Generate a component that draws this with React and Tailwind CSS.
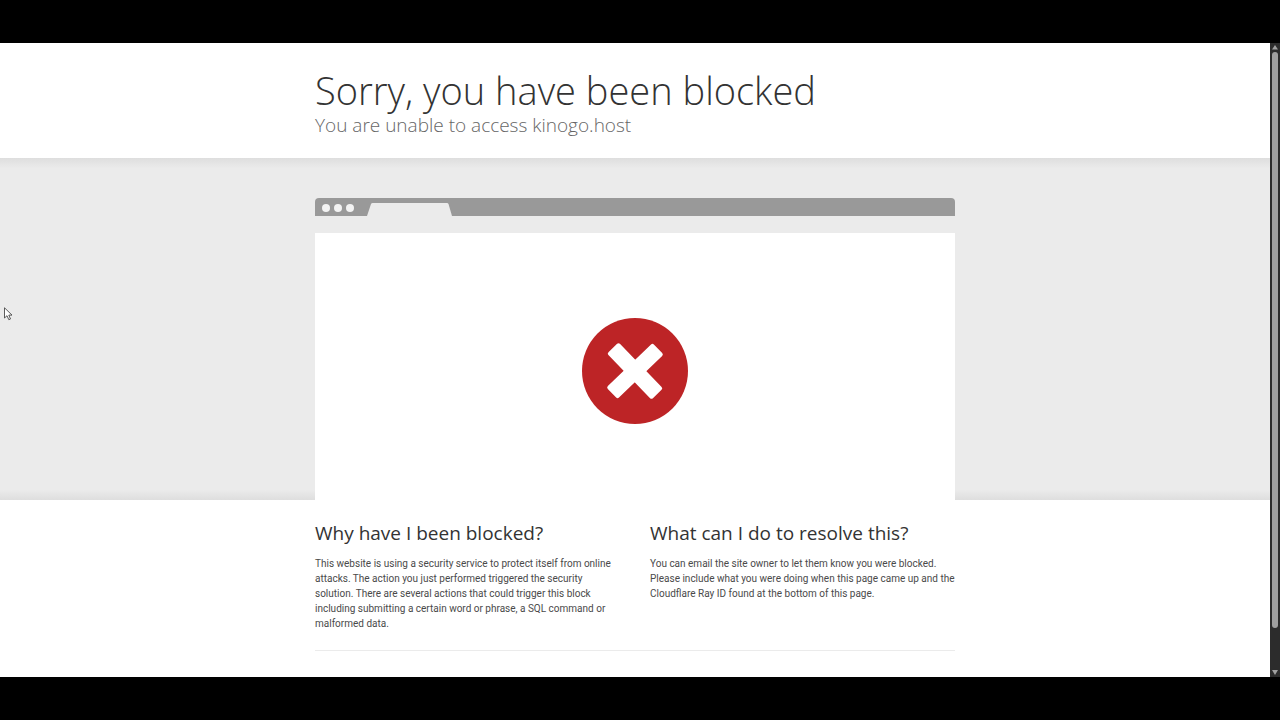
import React from 'react';

const PageHeader = () => (
  <header className="pt-[23px] pb-[21px]">
    <div className="w-1/2 min-w-[640px] mx-auto">
      <h1 className="text-[38px] leading-12 font-light text-[#333333]">Sorry, you have been blocked</h1>
      <h2 className="text-[19px] leading-[23px] font-light text-[#666666]">You are unable to access kinogo.host</h2>
    </div>
  </header>
);

const BrowserBar = () => (
  <div className="flex h-[18px] rounded-t-[4px] bg-[#999999] pl-[7px]">
    <div className="flex items-center gap-1 pt-[2px]">
      <span className="size-2 rounded-full bg-[#f3f3f3]" />
      <span className="size-2 rounded-full bg-[#f3f3f3]" />
      <span className="size-2 rounded-full bg-[#f3f3f3]" />
    </div>
    <svg className="ml-[13px] mt-[5px] h-[13px] w-[86px]" viewBox="0 0 86 13" aria-hidden="true">
      <path d="M0 13 4 1Q4.500 0 5.500 0H80Q81 0 81.500 1L85 13Z" fill="#ebebeb" />
    </svg>
  </div>
);

const BlockedIcon = () => (
  <svg className="size-[106px]" viewBox="0 0 106 106" role="img" aria-label="Blocked">
    <circle cx="53" cy="53" r="53" fill="#bd2426" />
    <g fill="#ffffff" transform="rotate(-44 53 53)">
      <rect x="21" y="45" width="64" height="16" rx="2" />
      <rect x="45" y="21" width="16" height="64" rx="2" />
    </g>
  </svg>
);

const InfoColumn = ({ title, children }) => (
  <div>
    <h2 className="text-[19px] leading-[26px] text-[#333333]">{title}</h2>
    <p className="mt-2.5 font-['Roboto','Open_Sans',sans-serif] text-[10px] leading-[15px] text-[#4a4a4a]">{children}</p>
  </div>
);

const Scrollbar = () => (
  <div className="flex w-[10px] shrink-0 flex-col items-center bg-[#2c2c2c] py-[2px]" aria-hidden="true">
    <svg className="h-[5px] w-[6px]" viewBox="0 0 6 5">
      <path d="M3 0 6 4.500H0Z" fill="#9f9f9f" />
    </svg>
    <div className="mt-[2px] h-[576px] w-[6px] rounded-full bg-[#9f9f9f]" />
    <svg className="mt-auto h-[5px] w-[6px]" viewBox="0 0 6 5">
      <path d="M0 0H6L3 5Z" fill="#9f9f9f" />
    </svg>
  </div>
);

export default function App() {
  return (
    <div className="relative flex min-h-screen flex-col bg-black py-[43px] font-['Open_Sans','Noto_Sans',sans-serif]">
      <div className="flex flex-1">
        <main className="flex-1 bg-white">
          <PageHeader />
          <section className="bg-[#ebebeb] bg-[linear-gradient(to_bottom,#dedede,#ebebeb_3%,#ebebeb_97%,#dedede)] pt-10">
            <div className="w-1/2 min-w-[640px] mx-auto">
              <BrowserBar />
              <div className="mt-[17px] flex h-[267px] items-center justify-center bg-white pt-2">
                <BlockedIcon />
              </div>
            </div>
          </section>
          <section className="w-1/2 min-w-[640px] mx-auto pt-5">
            <div className="grid grid-cols-[305px_305px] justify-between border-b border-[#ebebeb] pb-[19px]">
              <InfoColumn title="Why have I been blocked?">
                This website is using a security service to protect itself from online
                attacks. The action you just performed triggered the security
                solution. There are several actions that could trigger this block
                including submitting a certain word or phrase, a SQL command or
                malformed data.
              </InfoColumn>
              <InfoColumn title="What can I do to resolve this?">
                You can email the site owner to let them know you were blocked.
                Please include what you were doing when this page came up and the
                Cloudflare Ray ID found at the bottom of this page.
              </InfoColumn>
            </div>
          </section>
        </main>
        <Scrollbar />
      </div>
      {/* mouse pointer */}
      <svg className="absolute left-1 top-[307px] h-[14px] w-[9px]" viewBox="0 0 9 14" aria-hidden="true">
        <path d="M.5.8V11L3 8.700 4.800 12.700 6.500 12 4.800 8.100H8Z" fill="#ffffff" stroke="#333333" strokeWidth=".8" />
      </svg>
    </div>
  );
}
